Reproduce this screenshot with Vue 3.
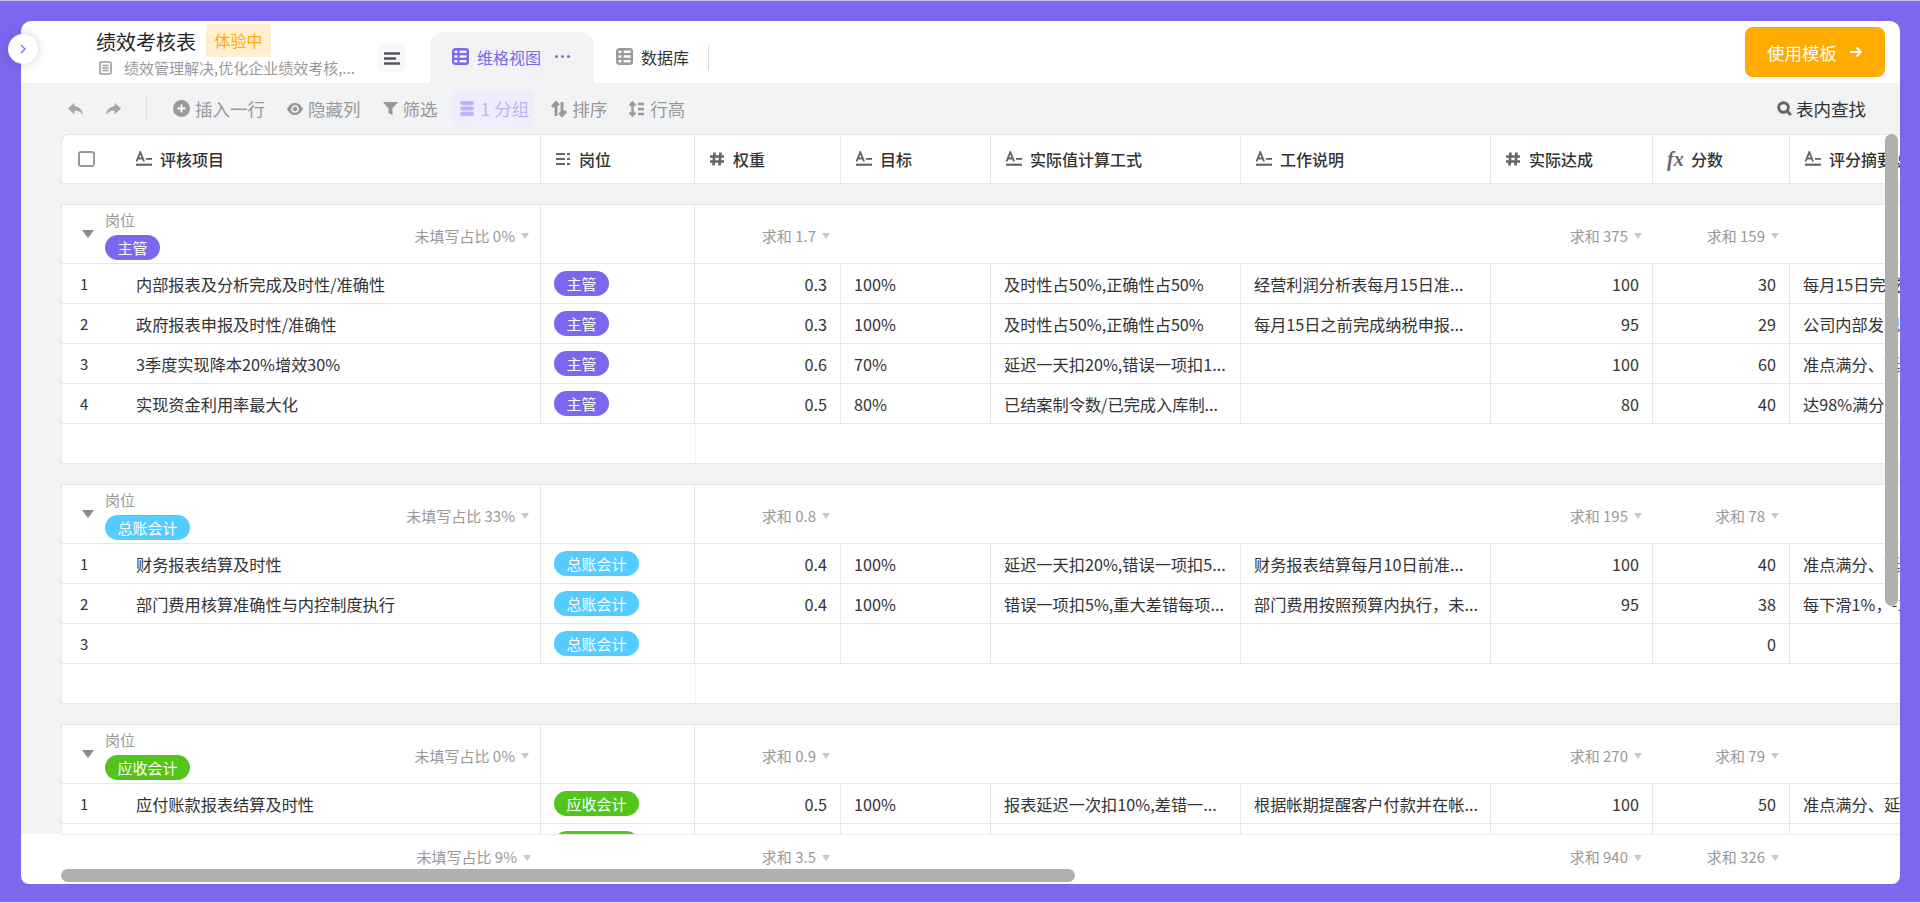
<template>
  <div class="page">
    <svg class="sprite">
      <symbol id="i-text" viewBox="0 0 18 16">
        <path d="M1.500 10.500 5.300 1.200 9.100 10.500M3 7.500h4.600" fill="none" stroke="currentColor" stroke-width="1.900" />
        <rect x="11" y="7" width="6" height="1.800" fill="currentColor" />
        <rect x="1" y="12.600" width="16" height="2.200" fill="currentColor" />
      </symbol>
      <symbol id="i-list" viewBox="0 0 16 16">
        <path d="M1 3h9M1 8h9M1 13h9" stroke="currentColor" stroke-width="2.200" fill="none" />
        <path d="M12 3h3M12 8h3M12 13h3" stroke="currentColor" stroke-width="2.200" fill="none" />
      </symbol>
      <symbol id="i-num" viewBox="0 0 16 16">
        <path d="M5.500 1.500 4.500 14.500M11.500 1.500l-1 13M1 5.500h14M1 10.500h14" stroke="currentColor" stroke-width="2.700" fill="none" />
      </symbol>
      <symbol id="i-table" viewBox="0 0 17 17">
        <rect x="1.200" y="1.200" width="14.600" height="14.600" rx="2" fill="none" stroke="currentColor" stroke-width="2.400" />
        <path d="M6.500 1v15M1 6.200h15M1 10.800h15" stroke="currentColor" stroke-width="2.200" fill="none" />
      </symbol>
    </svg>

    <div class="card">
      <button class="side-toggle">
        <svg width="8" height="12" viewBox="0 0 8 12"><path d="M2 2l4 4-4 4" fill="none" stroke="#7b68ee" stroke-width="1.300" /></svg>
      </button>

      <header class="top">
        <div class="info">
          <div class="title-line">
            <span class="title">绩效考核表</span>
            <span class="badge">体验中</span>
          </div>
          <div class="sub-line">
            <svg width="13" height="14" viewBox="0 0 13 14">
              <rect x="1" y="1" width="11" height="12" rx="1.500" fill="none" stroke="#999" stroke-width="1.600" />
              <path d="M3.500 4.500h6M3.500 7h6M3.500 9.500h6" stroke="#999" stroke-width="1.300" />
            </svg>
            <span>绩效管理解决,优化企业绩效考核,...</span>
          </div>
        </div>
        <div class="menu-btn">
          <svg width="16" height="13" viewBox="0 0 16 13">
            <path d="M0 1.500h16M0 6.500h12M0 11.500h16" stroke="#555" stroke-width="2.400" />
          </svg>
        </div>
        <div class="tab active">
          <svg class="tab-icon"><use href="#i-table" /></svg>
          <span>维格视图</span>
          <span class="dots">
            <i></i><i></i><i></i>
          </span>
        </div>
        <div class="tab">
          <svg class="tab-icon grey"><use href="#i-table" /></svg>
          <span>数据库</span>
        </div>
        <div class="tab-sep"></div>
        <button class="use-btn">
          使用模板
          <svg width="14" height="12" viewBox="0 0 14 12"><path d="M1 6h11M7.500 1.500 12 6l-4.500 4.500" fill="none" stroke="#fff" stroke-width="1.800" /></svg>
        </button>
      </header>

      <main class="main">
        <div class="toolbar">
          <svg class="undo" width="17" height="16" viewBox="0 0 16 15"><path d="M7 1.500.8 7 7 12.500V9.200c3.200-.4 5.600.6 8 3.800-.5-4.600-3.400-7.500-8-8V1.500Z" fill="#a6a6a6" /></svg>
          <svg class="redo" width="17" height="16" viewBox="0 0 16 15"><path d="M9 1.500 15.200 7 9 12.500V9.200c-3.200-.4-5.600.6-8 3.800.5-4.600 3.400-7.500 8-8V1.500Z" fill="#a6a6a6" /></svg>
          <div class="tool-sep"></div>
          <div class="tool">
            <svg width="17" height="17" viewBox="0 0 17 17"><circle cx="8.500" cy="8.500" r="8.500" fill="#999" /><path d="M8.500 4.500v8M4.500 8.500h8" stroke="#fff" stroke-width="1.800" /></svg>
            插入一行
          </div>
          <div class="tool">
            <svg width="16" height="14" viewBox="0 0 16 14"><path d="M8 1c3.600 0 6.400 2.600 8 6-1.600 3.400-4.400 6-8 6S1.600 10.400 0 7c1.600-3.400 4.400-6 8-6Z" fill="#999" /><circle cx="8" cy="7" r="3" fill="none" stroke="#f2f3f5" stroke-width="1.600" /></svg>
            隐藏列
          </div>
          <div class="tool">
            <svg width="15" height="15" viewBox="0 0 15 15"><path d="M0 1h15L9.500 7.500V14l-4-2V7.500L0 1Z" fill="#999" /></svg>
            筛选
          </div>
          <div class="tool grouped">
            <svg width="14" height="15" viewBox="0 0 14 15"><rect y="0" width="14" height="4.200" rx="2.100" /><rect y="5.400" width="14" height="4.200" rx="2.100" /><rect y="10.800" width="14" height="4.200" rx="2.100" /></svg>
            1 分组
          </div>
          <div class="tool">
            <svg width="16" height="16" viewBox="0 0 16 16"><path d="M5 15V3M1 6l4-4.500L7.500 4.500M11 1v12M15 10l-4 4.500L8.500 11.500" fill="none" stroke="#999" stroke-width="3" /></svg>
            排序
          </div>
          <div class="tool row-height">
            <svg width="15" height="16" viewBox="0 0 15 16"><path d="M3.500 2v12M.6 4.500l2.900-3 2.900 3M.6 11.500l2.900 3 2.900-3" fill="none" stroke="#999" stroke-width="2.400" /><path d="M9 3h6M9 8h6M9 13h6" stroke="#999" stroke-width="2.300" /></svg>
            行高
          </div>
          <div class="tool search">
            <svg width="15" height="15" viewBox="0 0 15 15"><circle cx="6.500" cy="6.500" r="4.800" fill="none" stroke="#666" stroke-width="3" /><path d="M10 10l4 4" stroke="#666" stroke-width="3" /></svg>
            表内查找
          </div>
        </div>

        <div class="table-head grid">
          <div class="cell head-first">
            <span class="checkbox"></span>
            <svg class="col-icon"><use href="#i-text" /></svg>
            <span>评核项目</span>
          </div>
          <div v-for="col in columns" :key="col.name" class="cell head-cell">
            <span v-if="col.icon === 'fx'" class="fx">fx</span>
            <svg v-else class="col-icon" :class="'ic-' + col.icon"><use :href="'#i-' + col.icon" /></svg>
            <span>{{ col.name }}</span>
          </div>
        </div>

        <section v-for="group in groups" :key="group.name" class="group">
          <div class="group-head grid">
            <div class="cell group-first">
              <span class="fold"></span>
              <div class="group-label">
                <div class="post-label">岗位</div>
                <span class="tag" :class="group.color">{{ group.name }}</span>
              </div>
              <span class="stat first-stat">未填写占比 {{ group.blank }}<i class="caret"></i></span>
            </div>
            <div class="cell"></div>
            <span class="stat">求和 {{ group.weight }}<i class="caret"></i></span>
            <span class="span3"></span>
            <span class="stat">求和 {{ group.actual }}<i class="caret"></i></span>
            <span class="stat">求和 {{ group.score }}<i class="caret"></i></span>
          </div>

          <div v-for="(row, i) in group.rows" :key="i" class="row grid">
            <div class="cell row-first">
              <span class="index">{{ i + 1 }}</span>
              <span>{{ row[0] }}</span>
            </div>
            <div class="cell tag-cell">
              <span class="tag" :class="group.color">{{ group.name }}</span>
            </div>
            <div class="cell num">{{ row[1] }}</div>
            <div class="cell">{{ row[2] }}</div>
            <div class="cell">{{ row[3] }}</div>
            <div class="cell">{{ row[4] }}</div>
            <div class="cell num">{{ row[5] }}</div>
            <div class="cell num">{{ row[6] }}</div>
            <div class="cell">{{ row[7] }}</div>
          </div>

          <div class="empty-row"><div></div></div>
        </section>
      </main>

      <footer class="total grid">
        <span class="stat total-first">未填写占比 9%<i class="caret"></i></span>
        <span></span>
        <span class="stat">求和 3.5<i class="caret"></i></span>
        <span class="span3"></span>
        <span class="stat">求和 940<i class="caret"></i></span>
        <span class="stat">求和 326<i class="caret"></i></span>
      </footer>

      <div class="scroll-y"></div>
      <div class="scroll-x"></div>
    </div>
  </div>
</template>

<script setup>
const columns = [
  { name: '岗位', icon: 'list' },
  { name: '权重', icon: 'num' },
  { name: '目标', icon: 'text' },
  { name: '实际值计算工式', icon: 'text' },
  { name: '工作说明', icon: 'text' },
  { name: '实际达成', icon: 'num' },
  { name: '分数', icon: 'fx' },
  { name: '评分摘要说明', icon: 'text' },
];

const groups = [
  {
    name: '主管',
    color: 'purple',
    blank: '0%',
    weight: '1.7',
    actual: '375',
    score: '159',
    rows: [
      ['内部报表及分析完成及时性/准确性', '0.3', '100%', '及时性占50%,正确性占50%', '经营利润分析表每月15日准...', '100', '30', '每月15日完成报表'],
      ['政府报表申报及时性/准确性', '0.3', '100%', '及时性占50%,正确性占50%', '每月15日之前完成纳税申报...', '95', '29', '公司内部发现差错'],
      ['3季度实现降本20%增效30%', '0.6', '70%', '延迟一天扣20%,错误一项扣1...', '', '100', '60', '准点满分、延迟扣分'],
      ['实现资金利用率最大化', '0.5', '80%', '已结案制令数/已完成入库制...', '', '80', '40', '达98%满分、每下滑'],
    ],
  },
  {
    name: '总账会计',
    color: 'blue',
    blank: '33%',
    weight: '0.8',
    actual: '195',
    score: '78',
    rows: [
      ['财务报表结算及时性', '0.4', '100%', '延迟一天扣20%,错误一项扣5...', '财务报表结算每月10日前准...', '100', '40', '准点满分、延迟扣分'],
      ['部门费用核算准确性与内控制度执行', '0.4', '100%', '错误一项扣5%,重大差错每项...', '部门费用按照预算内执行，未...', '95', '38', '每下滑1%，-1分'],
      ['', '', '', '', '', '', '0', ''],
    ],
  },
  {
    name: '应收会计',
    color: 'green',
    blank: '0%',
    weight: '0.9',
    actual: '270',
    score: '79',
    rows: [
      ['应付账款报表结算及时性', '0.5', '100%', '报表延迟一次扣10%,差错一...', '根据帐期提醒客户付款并在帐...', '100', '50', '准点满分、延迟扣分'],
      ['', '', '', '', '', '', '', ''],
    ],
  },
];
</script>

<style>
html,
body {
  margin: 0;
  background: #7b68ee;
}
</style>

<style scoped>
.page {
  box-sizing: border-box;
  height: 903px;
  padding: 20px 20px 18px 21px;
  background: #7b68ee;
  border-top: 1px solid #c8c6d4;
  border-bottom: 1px solid #e8e8ec;
  font-family: "Noto Sans CJK SC", "Noto Sans", sans-serif;
  color: #333;
  overflow: hidden;
}

.sprite {
  display: none;
}

.card {
  position: relative;
  height: 100%;
  display: flex;
  flex-direction: column;
  background: #fff;
  border-radius: 10px 10px 8px 8px;
}

.side-toggle {
  position: absolute;
  left: -13px;
  top: 13px;
  width: 30px;
  height: 30px;
  padding: 0;
  border: 0;
  border-radius: 50%;
  background: #fff;
  box-shadow: 0 0 8px rgba(60, 50, 140, 0.25);
  display: flex;
  align-items: center;
  justify-content: center;
  z-index: 3;
}

.top {
  height: 62px;
  flex: none;
  display: flex;
  align-items: flex-end;
  position: relative;
}

.info {
  align-self: flex-start;
  margin-left: 75px;
  width: 282px;
}

.title-line {
  display: flex;
  align-items: center;
  gap: 10px;
  height: 33px;
  margin-top: 3px;
}

.title {
  font-size: 20px;
  line-height: 33px;
  padding-top: 2px;
  color: #262626;
}

.badge {
  padding: 0 8.500px;
  height: 33px;
  line-height: 33px;
  font-size: 16px;
  color: #ffab00;
  background: #ffefcf;
  border-radius: 3px;
}

.sub-line {
  display: flex;
  align-items: center;
  gap: 12px;
  margin-top: 1px;
  margin-left: 3px;
  font-size: 15px;
  line-height: 20px;
  color: #999;
  white-space: nowrap;
}

.menu-btn {
  align-self: flex-start;
  margin-top: 23px;
  width: 27px;
  height: 28px;
  border-radius: 6px;
  background: #f8f7fe;
  display: flex;
  align-items: center;
  justify-content: center;
}

.tab {
  height: 51px;
  margin-left: 25px;
  display: flex;
  align-items: center;
  gap: 8px;
  padding-bottom: 2px;
  box-sizing: border-box;
  font-size: 16px;
  color: #333;
}

.tab.active {
  width: 164px;
  padding-left: 22px;
  color: #7b68ee;
  background: #f2f3f5;
  border-radius: 14px 14px 0 0;
}

.tab.active + .tab {
  margin-left: 22px;
}

.tab-icon {
  width: 17px;
  height: 17px;
  color: #7b68ee;
}

.tab-icon.grey {
  color: #999;
}

.dots {
  display: flex;
  gap: 3px;
  margin-left: 6px;
}

.dots i {
  width: 3px;
  height: 3px;
  border-radius: 50%;
  background: #7b68ee;
}

.tab-sep {
  align-self: flex-start;
  width: 1px;
  height: 25px;
  margin: 24px 0 0 19px;
  background: #d9d9d9;
}

.use-btn {
  position: absolute;
  right: 15px;
  top: 6px;
  width: 140px;
  height: 50px;
  border: 0;
  border-radius: 8px;
  background: #ffab00;
  color: #fff;
  font: inherit;
  font-size: 17.500px;
  display: flex;
  align-items: center;
  justify-content: center;
  gap: 12px;
}

.main {
  flex: 1;
  min-height: 0;
  overflow: hidden;
  background: #f2f3f5;
}

.toolbar {
  height: 51px;
  padding: 0 34px 0 46px;
  box-sizing: border-box;
  display: flex;
  align-items: center;
  gap: 21px;
  font-size: 17.500px;
  color: #999;
}

.tool-sep {
  width: 1px;
  height: 25px;
  margin: 0 5px 0 3px;
  background: #dcdde0;
}

.tool {
  display: flex;
  align-items: center;
  gap: 5px;
  white-space: nowrap;
}

.tool + .tool {
  margin-left: 1px;
}

.tool.grouped {
  height: 37px;
  margin: 0 -5px 0 -7px;
  padding: 0 5px 0 8px;
  gap: 7px;
  color: #bdb4f5;
  fill: #bdb4f5;
  background: #efecfd;
  border-radius: 6px;
}

.tool.row-height {
  gap: 6px;
}

.tool.search {
  margin-left: auto;
  gap: 4px;
  color: #333;
}

.grid {
  display: grid;
  grid-template-columns: 480px 154px 146px 150px 250px 250px 162px 137px 320px;
  width: 2049px;
}

.cell {
  box-sizing: border-box;
  display: flex;
  align-items: center;
  padding: 0 14px 0 13px;
  border-right: 1px solid #e5e6ea;
  white-space: nowrap;
  overflow: hidden;
  font-size: 16.200px;
}

.table-head {
  height: 50px;
  margin: 0 0 20px 40px;
  box-sizing: border-box;
  background: #fff;
  border: 1px solid #e5e6ea;
  border-width: 1px 0 1px 1px;
  border-top-left-radius: 8px;
  grid-template-columns: 479px 154px 146px 150px 250px 250px 162px 137px 320px;
  font-weight: 500;
}

.head-first {
  padding-left: 16px;
  font-size: 16px;
}

.head-cell {
  padding-left: 14px;
  font-size: 16px;
}

.checkbox {
  box-sizing: border-box;
  width: 17px;
  height: 16px;
  margin-right: 40px;
  border: 2px solid #999;
  border-radius: 3px;
}

.col-icon {
  flex: none;
  width: 18px;
  height: 16px;
  margin-right: 7px;
  color: #666;
}

.ic-list,
.ic-num {
  width: 16px;
  margin-right: 8px;
}

.fx {
  width: 16px;
  margin-right: 8px;
  font-family: "Liberation Serif", serif;
  font-style: italic;
  font-weight: 700;
  font-size: 20px;
  color: #666;
}

.group {
  margin: 0 0 20px 40px;
  width: 2049px;
  background: #fff;
  border: 1px solid #e5e6ea;
  border-width: 1px 0 1px 1px;
  box-sizing: border-box;
}

.group .grid {
  margin-left: -1px;
}

.group-head {
  height: 59px;
  box-sizing: border-box;
  border-bottom: 1px solid #e5e6ea;
}

.group-first {
  padding: 0 0 0 21px;
  position: relative;
}

.fold {
  width: 0;
  height: 0;
  border-left: 6px solid transparent;
  border-right: 6px solid transparent;
  border-top: 8px solid #888;
  margin-right: 11px;
}

.group-label {
  display: flex;
  flex-direction: column;
  align-items: flex-start;
  align-self: flex-start;
  margin-top: 5px;
  gap: 5px;
}

.post-label {
  font-size: 15px;
  line-height: 20px;
  color: #999;
}

.stat {
  display: flex;
  align-items: center;
  justify-content: flex-end;
  gap: 6px;
  padding: 2px 11px 0 0;
  font-size: 15px;
  color: #999;
}

.first-stat {
  margin-left: auto;
}

.total-first {
  padding-right: 10px;
}

.caret {
  width: 0;
  height: 0;
  border-left: 4px solid transparent;
  border-right: 4px solid transparent;
  border-top: 6px solid #c9c9c9;
  margin-top: 2px;
}

.span3 {
  grid-column: span 3;
}

.tag {
  display: inline-block;
  height: 25px;
  line-height: 25px;
  padding: 0 12.500px;
  border-radius: 13px;
  font-size: 15px;
  color: #fff;
  white-space: nowrap;
}

.tag.purple {
  background: #7b68ee;
}

.tag.blue {
  background: #55ccff;
}

.tag.green {
  background: #52c41a;
}

.row {
  height: 40px;
  box-sizing: border-box;
  border-bottom: 1px solid #e5e6ea;
}

.row-first {
  padding-left: 19px;
}

.index {
  width: 56px;
  flex: none;
  font-size: 15px;
}

.num {
  justify-content: flex-end;
  padding-right: 13px;
}

.empty-row {
  height: 39px;
}

.empty-row div {
  width: 633px;
  height: 100%;
  border-right: 1px solid #f5f5f7;
}

.total {
  height: 50px;
  flex: none;
  box-sizing: border-box;
  margin-left: 40px;
  padding-bottom: 8px;
  border-top: 1px solid #eceaf7;
  width: calc(100% - 40px);
  overflow: hidden;
}

.scroll-y {
  position: absolute;
  left: 1864px;
  top: 113px;
  width: 13px;
  height: 472px;
  background: #b0b0b0;
  border-radius: 7px;
}

.scroll-x {
  position: absolute;
  left: 40px;
  bottom: 2px;
  width: 1014px;
  height: 13px;
  background: #b0b0b0;
  border-radius: 7px;
}
</style>
